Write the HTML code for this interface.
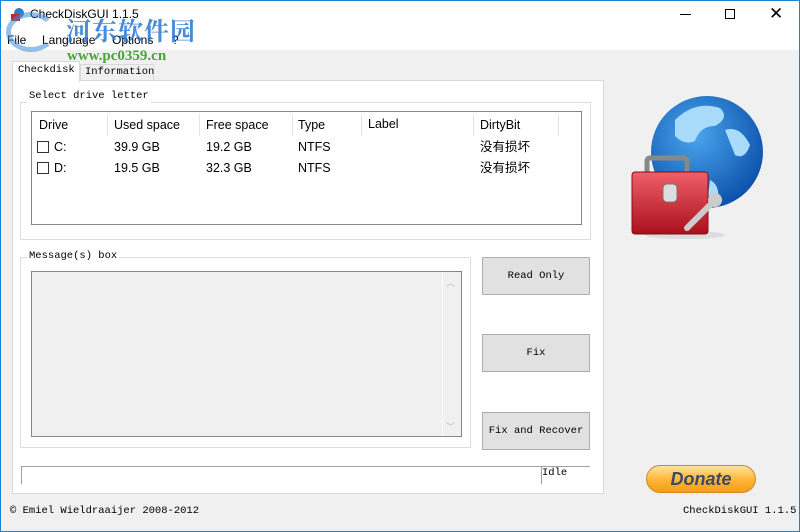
<!DOCTYPE html>
<html><head><meta charset="utf-8"><style>
*{box-sizing:border-box;margin:0;padding:0}
body{width:800px;height:532px;overflow:hidden;background:#f0f0f0;font-family:"Liberation Sans","Noto Sans CJK SC",sans-serif;position:relative}
.a{position:absolute}
.mono{font-family:"Liberation Mono","Noto Sans CJK SC",monospace;font-size:10.5px;color:#000;line-height:15px}
.btn{position:absolute;left:482px;width:108px;height:38px;background:#e1e1e1;border:1px solid #adadad;display:flex;align-items:center;justify-content:center}
.lv{font-size:12.5px;color:#000;line-height:15px}
.sep{position:absolute;top:114px;width:1px;height:22px;background:#e5e5e5}
.cb{display:inline-block;width:12px;height:12px;border:1px solid #333;vertical-align:-2px;margin-right:5px;background:#fff}
</style></head><body>
<div class="a" style="left:0;top:0;width:800px;height:532px;border:1px solid #1883d7;pointer-events:none;z-index:9"></div>
<div class="a" style="left:0;top:0;width:800px;height:50px;background:#fff"></div>
<svg class="a" style="left:9px;top:7px" width="16" height="16"><circle cx="10" cy="6" r="5" fill="#2a7fd0"/><rect x="2" y="7" width="9" height="7" fill="#c8202a"/></svg>
<div class="a" style="left:30px;top:7px;font-size:12px;color:#000">CheckDiskGUI 1.1.5</div>
<div class="a" style="left:680px;top:14px;width:11px;height:1px;background:#000"></div>
<div class="a" style="left:725px;top:9px;width:10px;height:10px;border:1px solid #000"></div>
<div class="a" style="left:769px;top:4px;font-size:17px;color:#000">✕</div>
<div class="a" style="left:7px;top:33px;font-size:12px;color:#000">File</div>
<div class="a" style="left:42px;top:33px;font-size:12px;color:#000">Language</div>
<div class="a" style="left:112px;top:33px;font-size:12px;color:#000">Options</div>
<div class="a" style="left:172px;top:33px;font-size:12px;color:#000">?</div>
<div class="a" style="left:6px;top:12px;width:50px;height:40px;border-radius:50%;border:5px solid rgba(60,140,220,.55);border-right-color:transparent"></div>
<div class="a" style="left:66px;top:12px;font-size:25px;font-weight:bold;color:rgba(40,120,210,.85);font-family:'Noto Serif CJK SC',serif;letter-spacing:1px">河东软件园</div>
<div class="a" style="left:67px;top:48px;font-size:15px;font-weight:bold;color:#4aa23a;font-family:'Liberation Serif',serif">www.pc0359.cn</div>
<div class="a mono" style="left:80px;top:64px;width:74px;height:17px;border:1px solid #d9d9d9;background:#f0f0f0;padding:0 4px">Information</div>
<div class="a mono" style="left:12px;top:61px;width:68px;height:21px;border:1px solid #d9d9d9;border-bottom:none;background:#fff;padding:1px 5px;z-index:2">Checkdisk</div>
<div class="a" style="left:12px;top:80px;width:592px;height:414px;background:#fff;border:1px solid #d9d9d9"></div>
<div class="a" style="left:20px;top:102px;width:571px;height:138px;border:1px solid #dcdcdc"></div>
<div class="a mono" style="left:27px;top:89px;background:#fff;padding:0 2px">Select drive letter</div>
<div class="a" style="left:31px;top:111px;width:551px;height:114px;border:1px solid #828790;background:#fff"></div>
<div class="sep" style="left:107px"></div><div class="sep" style="left:199px"></div><div class="sep" style="left:292px"></div><div class="sep" style="left:361px"></div><div class="sep" style="left:473px"></div><div class="sep" style="left:558px"></div>
<div class="a lv" style="left:39px;top:118px">Drive</div>
<div class="a lv" style="left:114px;top:118px">Used space</div>
<div class="a lv" style="left:206px;top:118px">Free space</div>
<div class="a lv" style="left:298px;top:118px">Type</div>
<div class="a lv" style="left:368px;top:117px">Label</div>
<div class="a lv" style="left:480px;top:118px">DirtyBit</div>
<div class="a lv" style="left:37px;top:140px"><span class="cb"></span>C:</div>
<div class="a lv" style="left:114px;top:140px">39.9 GB</div>
<div class="a lv" style="left:206px;top:140px">19.2 GB</div>
<div class="a lv" style="left:298px;top:140px">NTFS</div>
<div class="a lv" style="left:480px;top:140px">没有损坏</div>
<div class="a lv" style="left:37px;top:161px"><span class="cb"></span>D:</div>
<div class="a lv" style="left:114px;top:161px">19.5 GB</div>
<div class="a lv" style="left:206px;top:161px">32.3 GB</div>
<div class="a lv" style="left:298px;top:161px">NTFS</div>
<div class="a lv" style="left:480px;top:161px">没有损坏</div>
<div class="a" style="left:20px;top:257px;width:451px;height:191px;border:1px solid #dcdcdc"></div>
<div class="a mono" style="left:27px;top:249px;background:#fff;padding:0 2px">Message(s) box</div>
<div class="a" style="left:31px;top:271px;width:431px;height:166px;border:1px solid #828790;background:#f0f0f0"></div>
<div class="a" style="left:442px;top:272px;width:1px;height:164px;background:#fafafa"></div>
<div class="a" style="left:446px;top:276px;font-size:9px;color:#bbb">︿</div>
<div class="a" style="left:446px;top:420px;font-size:9px;color:#bbb">﹀</div>
<div class="btn mono" style="top:257px">Read Only</div>
<div class="btn mono" style="top:334px">Fix</div>
<div class="btn mono" style="top:412px">Fix and Recover</div>
<div class="a" style="left:21px;top:466px;width:569px;height:1px;background:#a0a0a0"></div>
<div class="a" style="left:21px;top:466px;width:1px;height:18px;background:#a0a0a0"></div>
<div class="a" style="left:541px;top:466px;width:1px;height:18px;background:#a0a0a0"></div>
<div class="a mono" style="left:542px;top:466px">Idle</div>
<svg class="a" style="left:625px;top:90px" width="160" height="150" viewBox="0 0 160 150">
<defs><radialGradient id="g" cx="0.4" cy="0.35" r="0.7"><stop offset="0" stop-color="#4aa6ee"/><stop offset="1" stop-color="#0a4ea8"/></radialGradient>
<linearGradient id="r" x1="0" y1="0" x2="0" y2="1"><stop offset="0" stop-color="#f06068"/><stop offset="1" stop-color="#a8101c"/></linearGradient></defs>
<ellipse cx="60" cy="145" rx="40" ry="4" fill="#ddd"/>
<circle cx="82" cy="62" r="56" fill="url(#g)"/>
<path d="M50 30 q20-20 45-12 q10 10-5 18 q-15 0-20 15 q-10 5-20-5z M100 40 q15-5 25 15 q-5 15-15 10z M85 90 q10 5 8 20 q-8 5-10-5z" fill="#a8dcfa"/>
<rect x="22" y="68" width="40" height="16" rx="3" fill="none" stroke="#888" stroke-width="5"/>
<rect x="7" y="82" width="76" height="62" rx="3" fill="url(#r)" stroke="#8a0a14"/>
<rect x="38" y="94" width="14" height="18" rx="4" fill="#ddd" stroke="#777"/>
<path d="M62 138 L88 112" stroke="#ccc" stroke-width="6" stroke-linecap="round"/>
<circle cx="90" cy="110" r="7" fill="#ccc"/>
</svg>
<div class="a" style="left:646px;top:465px;width:110px;height:28px;border-radius:14px;background:linear-gradient(#ffe3a0,#ffb73a 50%,#f49d18);border:1px solid #d08a20;text-align:center;font:italic bold 18px 'Liberation Sans',sans-serif;color:#3c4a66;line-height:26px">Donate</div>
<div class="a mono" style="left:10px;top:504px">© Emiel Wieldraaijer 2008-2012</div>
<div class="a mono" style="left:683px;top:504px">CheckDiskGUI 1.1.5</div>
</body></html>
